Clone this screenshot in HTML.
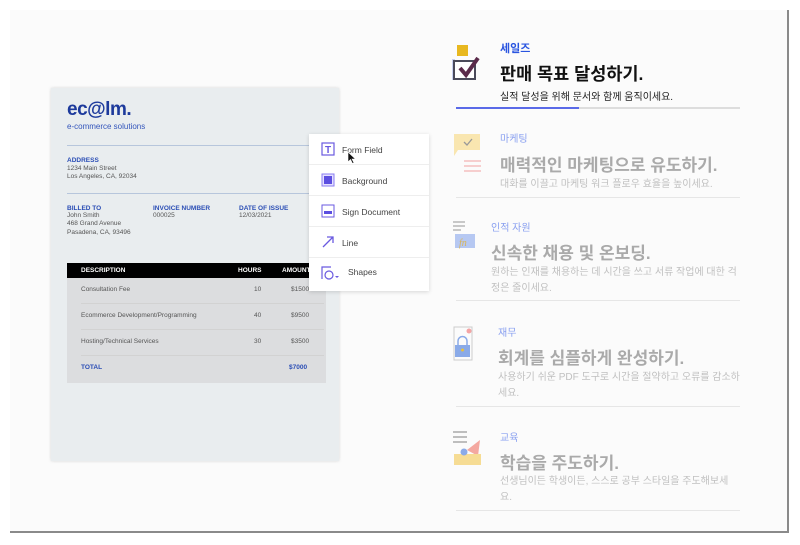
<!DOCTYPE html><html><head><meta charset="utf-8"><style>
*{margin:0;padding:0;box-sizing:border-box}
body{width:800px;height:545px;background:#fff;font-family:"Liberation Sans","Noto Sans CJK KR",sans-serif;position:relative;overflow:hidden}
.frame{position:absolute;left:10px;top:10px;width:779px;height:523px;background:#fbfbfb;border-right:2px solid #8a8a8a;border-bottom:2px solid #8a8a8a}
.a{position:absolute;white-space:nowrap}
.card{position:absolute;left:51px;top:88px;width:288px;height:373px;background:#e9edef;box-shadow:0 0 3px rgba(0,0,0,.15)}
.blue{color:#2444b0}
.lab{font-size:6.5px;font-weight:bold;color:#2a4db5}
.sm{font-size:6.5px;color:#555;line-height:8.3px}
.menu{position:absolute;left:309px;top:134px;width:120px;height:157px;background:#fff;box-shadow:0 1px 4px rgba(0,0,0,.15)}
.mi{height:31px;border-bottom:1px solid #eee;position:relative;font-size:8.5px;color:#444}
.mi span{position:absolute;left:33px;top:11px}
.k{font-size:10px;color:#8aa0f0}
.t{font-size:17px;font-weight:bold;color:#aaa}
.s{font-size:10px;color:#c0c0c0;line-height:16px}
.hr{position:absolute;left:456px;width:284px;height:1px;background:#e6e6e6}
</style></head><body>
<div class="frame"></div>
<div class="card">
 <div class="a blue" style="left:16px;top:11px;font-size:19px;font-weight:bold;color:#1d3a9c;letter-spacing:-0.5px">ec@lm.</div>
 <div class="a blue" style="left:16px;top:34px;font-size:8px;color:#3355bb">e-commerce solutions</div>
 <div class="a" style="left:16px;top:57px;width:272px;height:1px;background:#b7c6dc"></div>
 <div class="a lab" style="left:16px;top:69px">ADDRESS</div>
 <div class="a sm" style="left:16px;top:77px">1234 Main Street<br>Los Angeles, CA, 92034</div>
 <div class="a" style="left:16px;top:105px;width:272px;height:1px;background:#b7c6dc"></div>
 <div class="a lab" style="left:16px;top:117px">BILLED TO</div>
 <div class="a sm" style="left:16px;top:124px">John Smith<br>468 Grand Avenue<br>Pasadena, CA, 93496</div>
 <div class="a lab" style="left:102px;top:117px">INVOICE NUMBER</div>
 <div class="a sm" style="left:102px;top:124px">000025</div>
 <div class="a lab" style="left:188px;top:117px">DATE OF ISSUE</div>
 <div class="a sm" style="left:188px;top:124px">12/03/2021</div>
 <div class="a" style="left:16px;top:175px;width:259px;height:120px;background:#dcdddf"></div>
 <div class="a" style="left:16px;top:175px;width:259px;height:15px;background:#000"></div>
 <div class="a" style="left:30px;top:179px;font-size:6.5px;font-weight:bold;color:#fff">DESCRIPTION</div>
 <div class="a" style="left:187px;top:179px;font-size:6.5px;font-weight:bold;color:#fff">HOURS</div>
 <div class="a" style="left:231px;top:179px;font-size:6.5px;font-weight:bold;color:#fff">AMOUNT</div>
 <div class="a sm" style="left:30px;top:198px">Consultation Fee</div><div class="a sm" style="left:203px;top:198px">10</div><div class="a sm" style="left:240px;top:198px">$1500</div>
 <div class="a" style="left:30px;top:215px;width:243px;height:1px;background:#d2d2d2"></div>
 <div class="a sm" style="left:30px;top:224px">Ecommerce Development/Programming</div><div class="a sm" style="left:203px;top:224px">40</div><div class="a sm" style="left:240px;top:224px">$9500</div>
 <div class="a" style="left:30px;top:241px;width:243px;height:1px;background:#d2d2d2"></div>
 <div class="a sm" style="left:30px;top:250px">Hosting/Technical Services</div><div class="a sm" style="left:203px;top:250px">30</div><div class="a sm" style="left:240px;top:250px">$3500</div>
 <div class="a" style="left:30px;top:267px;width:243px;height:1px;background:#d2d2d2"></div>
 <div class="a lab" style="left:30px;top:276px">TOTAL</div><div class="a lab" style="left:238px;top:276px">$7000</div>
</div>
<div class="menu">
 <div class="mi"><svg class="a" style="left:12px;top:8px" width="14" height="14"><rect x="1" y="1" width="12" height="12" fill="none" stroke="#6a5ae0" stroke-width="1.2"/><text x="7" y="11" font-size="10" font-weight="bold" text-anchor="middle" fill="#6a5ae0" font-family="Liberation Sans">T</text></svg><span>Form Field</span>
  <svg class="a" style="left:38px;top:17px" width="10" height="13"><path d="M1 1 L1 11 L3.5 8.5 L5.5 12.5 L7 11.8 L5 8 L8.5 8 Z" fill="#111" stroke="#fff" stroke-width=".6"/></svg></div>
 <div class="mi"><svg class="a" style="left:12px;top:8px" width="14" height="14"><rect x="1" y="1" width="12" height="12" fill="#e4e0ff" stroke="#8a7cf0"/><rect x="3" y="3" width="8" height="8" fill="#5b4ee0"/></svg><span>Background</span></div>
 <div class="mi"><svg class="a" style="left:12px;top:8px" width="14" height="14"><rect x="1" y="1" width="12" height="12" fill="none" stroke="#6a5ae0"/><rect x="3" y="7" width="8" height="3" fill="#5b4ee0"/></svg><span>Sign Document</span></div>
 <div class="mi"><svg class="a" style="left:12px;top:8px" width="14" height="14"><path d="M2 12 L12 2 M6 2 H12 V8" fill="none" stroke="#6a5ae0" stroke-width="1.3"/></svg><span>Line</span></div>
 <div class="mi" style="border:none"><svg class="a" style="left:12px;top:8px" width="20" height="14"><path d="M1 13 V1 H10" fill="none" stroke="#6a5ae0" stroke-width="1.2"/><circle cx="8" cy="9" r="4" fill="none" stroke="#6a5ae0" stroke-width="1.2"/><path d="M14 10 L18 10 L16 12 Z" fill="#6a5ae0"/></svg><span style="left:39px;top:9px">Shapes</span></div>
</div>
<svg class="a" style="left:452px;top:44px" width="36" height="40"><rect x="5" y="1" width="11" height="11" fill="#e8b820"/><rect x="0" y="15" width="3" height="21" fill="#c8d0f0"/><rect x="2" y="17" width="21" height="18" fill="#fff" stroke="#4a4a5a" stroke-width="2"/><path d="M8 24 L14 31 L26 14" fill="none" stroke="#5a2a4a" stroke-width="4"/></svg>
<div class="a" style="left:500px;top:40px;font-size:11px;font-weight:bold;color:#2a55e0">세일즈</div>
<div class="a" style="left:500px;top:61px;font-size:17.5px;font-weight:bold;color:#111">판매 목표 달성하기.</div>
<div class="a" style="left:500px;top:88px;font-size:10px;color:#222">실적 달성을 위해 문서와 함께 움직이세요.</div>
<div class="a" style="left:456px;top:107px;width:284px;height:2px;background:#ddd"></div>
<div class="a" style="left:456px;top:107px;width:123px;height:2px;background:#5a6ae8"></div>

<svg class="a" style="left:452px;top:132px" width="36" height="44"><path d="M2 2 H28 V18 H6 L2 24 Z" fill="#f9e6b0"/><path d="M12 10 L15 13 L20 7" fill="none" stroke="#999" stroke-width="1.3"/><path d="M12 29 H29 M12 34 H29 M12 39 H29" stroke="#f4b4b4" stroke-width="1.3"/></svg>
<div class="a k" style="left:500px;top:130px">마케팅</div>
<div class="a t" style="left:500px;top:151px">매력적인 마케팅으로 유도하기.</div>
<div class="a s" style="left:500px;top:177px">대화를 이끌고 마케팅 워크 플로우 효율을 높이세요.</div>
<div class="hr" style="top:197px"></div>

<svg class="a" style="left:452px;top:220px" width="36" height="32"><path d="M1 2 H13 M1 6 H13 M1 10 H9" stroke="#aaa" stroke-width="1.2"/><rect x="3" y="14" width="20" height="14" fill="#b6c8f2"/><text x="7" y="26" font-size="10" font-style="italic" fill="#d9b55a" font-family="Liberation Serif">fn</text></svg>
<div class="a k" style="left:491px;top:219px">인적 자원</div>
<div class="a t" style="left:491px;top:239px">신속한 채용 및 온보딩.</div>
<div class="a s" style="left:491px;top:265px">원하는 인재를 채용하는 데 시간을 쓰고 서류 작업에 대한 걱<br>정은 줄이세요.</div>
<div class="hr" style="top:300px"></div>

<svg class="a" style="left:452px;top:325px" width="36" height="40"><rect x="2" y="2" width="18" height="33" fill="none" stroke="#ccc"/><circle cx="17" cy="6" r="2.5" fill="#f4a4a4"/><path d="M6 20 V16 A4.5 4.5 0 0 1 15 16 V20" fill="none" stroke="#8aaae8" stroke-width="1.5"/><rect x="3" y="20" width="15" height="12" fill="#8aaae8"/><circle cx="10.5" cy="25" r="1.5" fill="#e8c040"/></svg>
<div class="a k" style="left:498px;top:324px">재무</div>
<div class="a t" style="left:498px;top:344px">회계를 심플하게 완성하기.</div>
<div class="a s" style="left:498px;top:370px">사용하기 쉬운 PDF 도구로 시간을 절약하고 오류를 감소하<br>세요.</div>
<div class="hr" style="top:406px"></div>

<svg class="a" style="left:452px;top:430px" width="36" height="40"><path d="M1 2 H15 M1 7 H15 M1 12 H15" stroke="#999" stroke-width="1.2"/><path d="M15 20 L28 10 L26 26 Z" fill="#f4a8a0"/><rect x="2" y="24" width="27" height="11" fill="#f6dc94"/><circle cx="12" cy="22" r="3.5" fill="#8aaae8"/></svg>
<div class="a k" style="left:500px;top:429px">교육</div>
<div class="a t" style="left:500px;top:449px">학습을 주도하기.</div>
<div class="a s" style="left:500px;top:474px">선생님이든 학생이든, 스스로 공부 스타일을 주도해보세<br>요.</div>
<div class="hr" style="top:510px"></div>
</body></html>
